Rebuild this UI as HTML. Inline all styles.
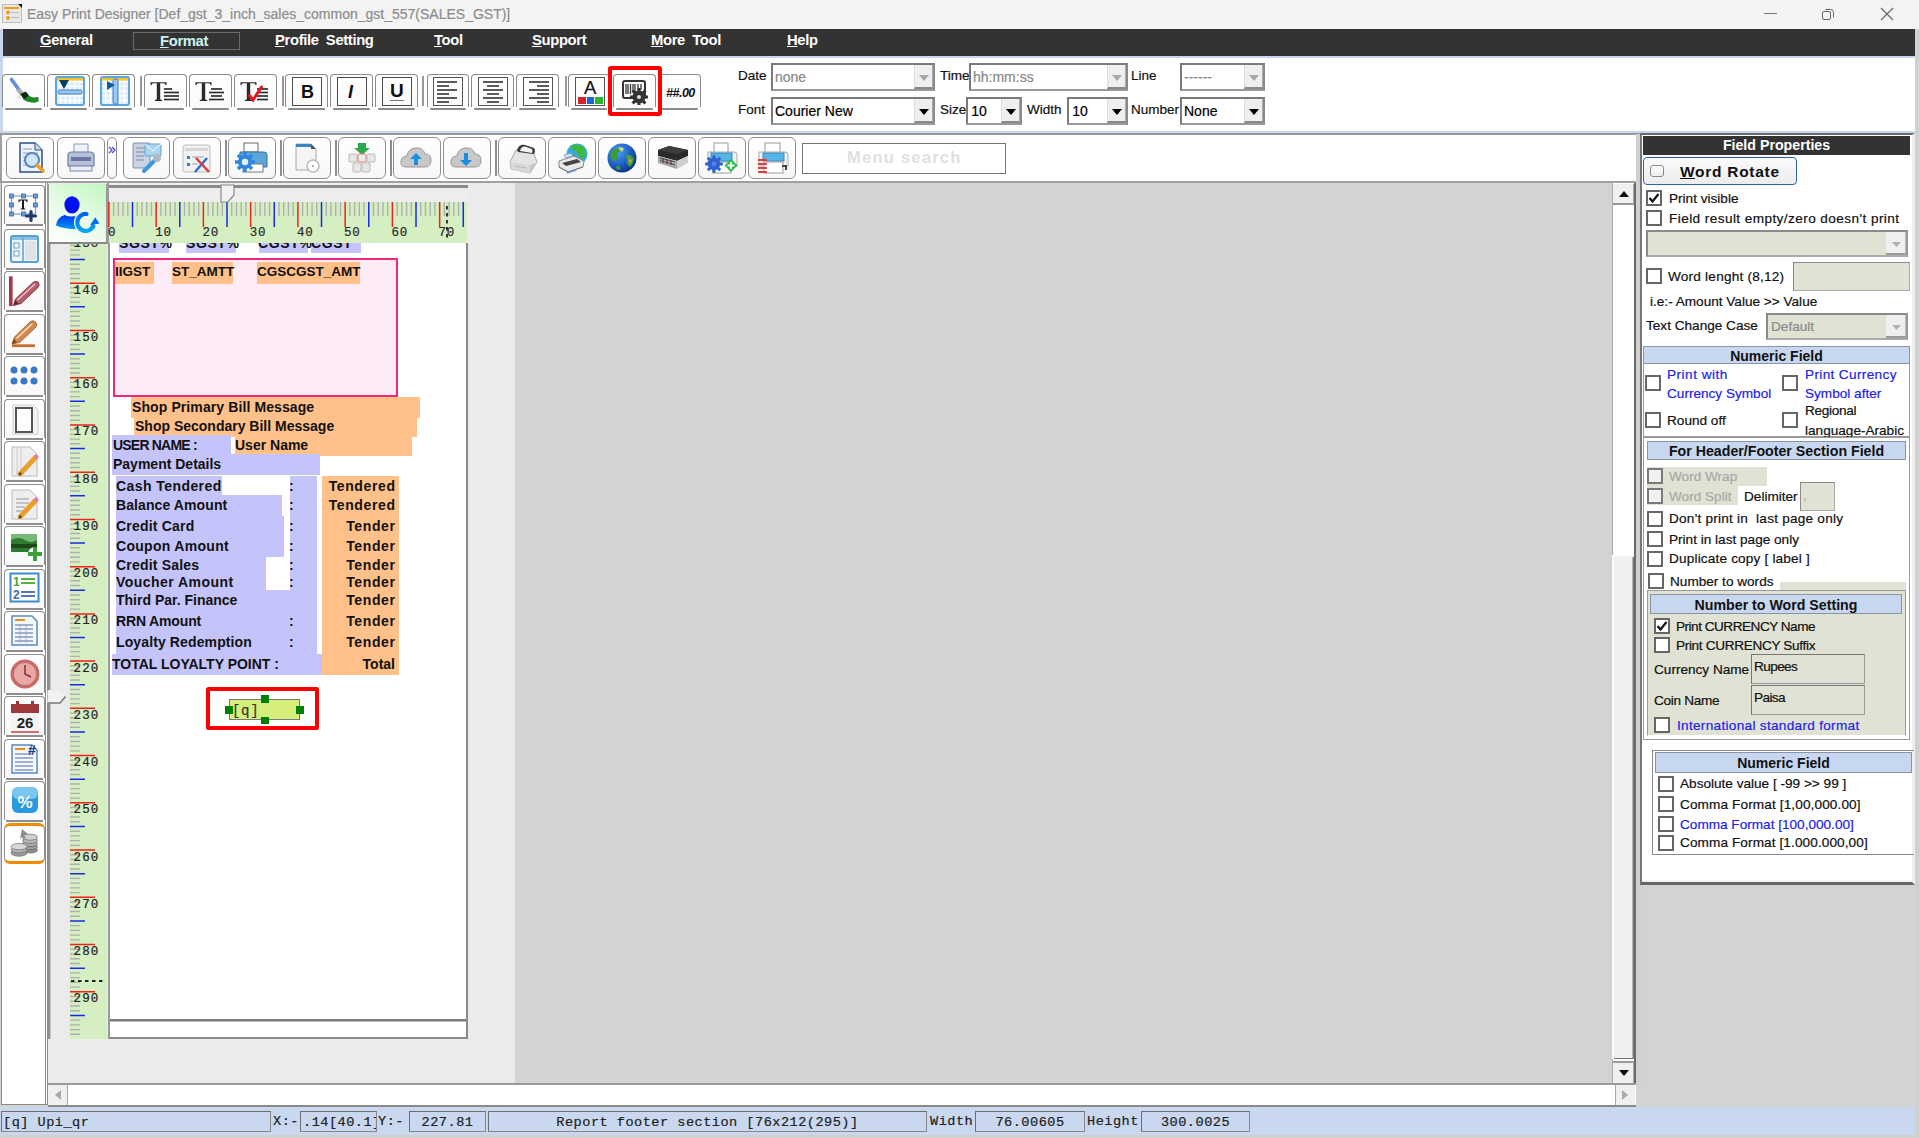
<!DOCTYPE html>
<html><head><meta charset="utf-8">
<style>
*{margin:0;padding:0;box-sizing:border-box}
html,body{width:1919px;height:1138px;overflow:hidden;background:#d3d3d3;font-family:"Liberation Sans",sans-serif;position:relative}
.a{position:absolute}
.t{position:absolute;white-space:pre;line-height:1;-webkit-text-stroke:0.2px currentColor}
.t[style*="font-weight:bold"],#menu .t{-webkit-text-stroke:0}
.tb{position:absolute;background:#fff;border:1px solid #a9a9a9;border-radius:5px;box-shadow:inset 0 -1px 0 #cfcfcf}
.cb{position:absolute;width:16px;height:16px;border:2px solid #6b6b6b;background:#fff}
.mono{font-family:"Liberation Mono",monospace}
</style></head><body>

<!-- ============ TITLE BAR ============ -->
<div class="a" style="left:0;top:0;width:1919px;height:29px;background:#f3f3f3"></div>
<svg class="a" style="left:2px;top:3px" width="21" height="21" viewBox="0 0 21 21">
 <rect x="0.5" y="1.5" width="19" height="18" fill="#e8e8e8" stroke="#bdbdbd"/>
 <rect x="2" y="4" width="15" height="2" fill="#f39a1a"/>
 <circle cx="6" cy="9.5" r="2" fill="#f39a1a"/><circle cx="6" cy="15" r="2" fill="#f39a1a"/>
 <rect x="9" y="9" width="8" height="1" fill="#bbb"/><rect x="9" y="14" width="8" height="1" fill="#bbb"/>
 <path d="M16 1h4v4z" fill="#111"/>
</svg>
<div class="t" style="left:27px;top:7px;font-size:14px;color:#8c8c8c">Easy Print Designer [Def_gst_3_inch_sales_common_gst_557(SALES_GST)]</div>
<div class="a" style="left:1764px;top:13px;width:13px;height:1px;background:#777"></div>
<svg class="a" style="left:1821px;top:7px" width="14" height="14" viewBox="0 0 14 14"><rect x="1.5" y="4.5" width="8" height="8" rx="1.5" fill="none" stroke="#666"/><path d="M4.5 2.5h5a3 3 0 0 1 3 3v5" fill="none" stroke="#666"/></svg>
<svg class="a" style="left:1880px;top:7px" width="14" height="14" viewBox="0 0 14 14"><path d="M1 1L13 13M13 1L1 13" stroke="#666" stroke-width="1.2"/></svg>

<!-- ============ MENU BAR ============ -->
<div class="a" style="left:0;top:29px;width:3px;height:104px;background:#c8d6ee"></div>
<div class="a" style="left:1915px;top:29px;width:4px;height:1109px;background:#d0d0d0"></div>
<div class="a" style="left:3px;top:29px;width:1912px;height:27px;background:#333"></div>
<div class="a" style="left:3px;top:56px;width:1912px;height:2px;background:#c8d6ee"></div>
<div class="a" style="left:133px;top:32px;width:107px;height:18px;border:1px solid #6a6a6a"></div>
<div id="menu" style="position:absolute;left:0;top:0;color:#fff;font-weight:bold;font-size:14.8px;letter-spacing:-0.35px;word-spacing:3.5px">
 <div class="t" style="left:40px;top:33px"><u>G</u>eneral</div>
 <div class="t" style="left:160px;top:34px;color:#cdf2f0"><u>F</u>ormat</div>
 <div class="t" style="left:275px;top:33px"><u>P</u>rofile Setting</div>
 <div class="t" style="left:434px;top:33px"><u>T</u>ool</div>
 <div class="t" style="left:532px;top:33px"><u>S</u>upport</div>
 <div class="t" style="left:651px;top:33px"><u>M</u>ore Tool</div>
 <div class="t" style="left:787px;top:33px"><u>H</u>elp</div>
</div>

<!-- ============ TOOLBAR 1 ============ -->
<div class="a" style="left:3px;top:58px;width:1912px;height:73px;background:#fff"></div>
<div class="a" style="left:0;top:131px;width:1915px;height:2px;background:#c8d6ee"></div>
<div class="a" style="left:0;top:133px;width:1915px;height:2px;background:#9a9a9a"></div>
<div class="a" style="left:2px;top:74px;width:43px;height:33px;border:1.5px solid #8a8a8a;border-bottom:none;border-radius:4px 4px 0 0;background:linear-gradient(#fff,#fafafa)"></div><div class="a" style="left:5px;top:108px;width:37px;height:2px;background:#8a8a8a;border-radius:1px"></div>
<div class="a" style="left:47px;top:74px;width:43px;height:33px;border:1.5px solid #8a8a8a;border-bottom:none;border-radius:4px 4px 0 0;background:linear-gradient(#fff,#fafafa)"></div><div class="a" style="left:50px;top:108px;width:37px;height:2px;background:#8a8a8a;border-radius:1px"></div>
<div class="a" style="left:92px;top:74px;width:43px;height:33px;border:1.5px solid #8a8a8a;border-bottom:none;border-radius:4px 4px 0 0;background:linear-gradient(#fff,#fafafa)"></div><div class="a" style="left:95px;top:108px;width:37px;height:2px;background:#8a8a8a;border-radius:1px"></div>
<div class="a" style="left:140px;top:76px;width:2px;height:30px;background:#9a9a9a"></div>
<div class="a" style="left:144px;top:74px;width:43px;height:33px;border:1.5px solid #8a8a8a;border-bottom:none;border-radius:4px 4px 0 0;background:linear-gradient(#fff,#fafafa)"></div><div class="a" style="left:147px;top:108px;width:37px;height:2px;background:#8a8a8a;border-radius:1px"></div>
<div class="a" style="left:189px;top:74px;width:43px;height:33px;border:1.5px solid #8a8a8a;border-bottom:none;border-radius:4px 4px 0 0;background:linear-gradient(#fff,#fafafa)"></div><div class="a" style="left:192px;top:108px;width:37px;height:2px;background:#8a8a8a;border-radius:1px"></div>
<div class="a" style="left:234px;top:74px;width:43px;height:33px;border:1.5px solid #8a8a8a;border-bottom:none;border-radius:4px 4px 0 0;background:linear-gradient(#fff,#fafafa)"></div><div class="a" style="left:237px;top:108px;width:37px;height:2px;background:#8a8a8a;border-radius:1px"></div>
<div class="a" style="left:282px;top:76px;width:2px;height:30px;background:#9a9a9a"></div>
<div class="a" style="left:285px;top:74px;width:43px;height:33px;border:1.5px solid #8a8a8a;border-bottom:none;border-radius:4px 4px 0 0;background:linear-gradient(#fff,#fafafa)"></div><div class="a" style="left:288px;top:108px;width:37px;height:2px;background:#8a8a8a;border-radius:1px"></div>
<div class="a" style="left:330px;top:74px;width:43px;height:33px;border:1.5px solid #8a8a8a;border-bottom:none;border-radius:4px 4px 0 0;background:linear-gradient(#fff,#fafafa)"></div><div class="a" style="left:333px;top:108px;width:37px;height:2px;background:#8a8a8a;border-radius:1px"></div>
<div class="a" style="left:375px;top:74px;width:43px;height:33px;border:1.5px solid #8a8a8a;border-bottom:none;border-radius:4px 4px 0 0;background:linear-gradient(#fff,#fafafa)"></div><div class="a" style="left:378px;top:108px;width:37px;height:2px;background:#8a8a8a;border-radius:1px"></div>
<div class="a" style="left:422px;top:76px;width:2px;height:30px;background:#9a9a9a"></div>
<div class="a" style="left:427px;top:74px;width:42px;height:33px;border:1.5px solid #8a8a8a;border-bottom:none;border-radius:4px 4px 0 0;background:linear-gradient(#fff,#fafafa)"></div><div class="a" style="left:430px;top:108px;width:36px;height:2px;background:#8a8a8a;border-radius:1px"></div>
<div class="a" style="left:471px;top:74px;width:43px;height:33px;border:1.5px solid #8a8a8a;border-bottom:none;border-radius:4px 4px 0 0;background:linear-gradient(#fff,#fafafa)"></div><div class="a" style="left:474px;top:108px;width:37px;height:2px;background:#8a8a8a;border-radius:1px"></div>
<div class="a" style="left:516px;top:74px;width:43px;height:33px;border:1.5px solid #8a8a8a;border-bottom:none;border-radius:4px 4px 0 0;background:linear-gradient(#fff,#fafafa)"></div><div class="a" style="left:519px;top:108px;width:37px;height:2px;background:#8a8a8a;border-radius:1px"></div>
<div class="a" style="left:565px;top:76px;width:2px;height:30px;background:#9a9a9a"></div>
<div class="a" style="left:568px;top:74px;width:42px;height:33px;border:1.5px solid #8a8a8a;border-bottom:none;border-radius:4px 4px 0 0;background:linear-gradient(#fff,#fafafa)"></div><div class="a" style="left:571px;top:108px;width:36px;height:2px;background:#8a8a8a;border-radius:1px"></div>
<div class="a" style="left:613px;top:74px;width:43px;height:33px;border:1.5px solid #8a8a8a;border-bottom:none;border-radius:4px 4px 0 0;background:linear-gradient(#fff,#fafafa)"></div><div class="a" style="left:616px;top:108px;width:37px;height:2px;background:#8a8a8a;border-radius:1px"></div>
<div class="a" style="left:658px;top:74px;width:43px;height:33px;border:1.5px solid #8a8a8a;border-bottom:none;border-radius:4px 4px 0 0;background:linear-gradient(#fff,#fafafa)"></div><div class="a" style="left:661px;top:108px;width:37px;height:2px;background:#8a8a8a;border-radius:1px"></div>
<div class="a" style="left:292px;top:77px;width:30px;height:29px;border:1.6px solid #4a4a4a"></div>
<div class="a" style="left:337px;top:77px;width:30px;height:29px;border:1.6px solid #4a4a4a"></div>
<div class="a" style="left:382px;top:77px;width:30px;height:29px;border:1.6px solid #4a4a4a"></div>
<div class="a" style="left:433px;top:77px;width:30px;height:29px;border:1.6px solid #555"></div>
<div class="a" style="left:478px;top:77px;width:30px;height:29px;border:1.6px solid #555"></div>
<div class="a" style="left:523px;top:77px;width:30px;height:29px;border:1.6px solid #555"></div>
<div class="a" style="left:575px;top:77px;width:30px;height:29px;border:1.6px solid #555"></div>
<svg class="a" style="left:8px;top:76px" width="32" height="30" viewBox="0 0 32 30">
 <path d="M3.5 3.5L11.5 14.5" stroke="#6a90d8" stroke-width="3.8" stroke-linecap="round"/>
 <path d="M10 13L14.5 19" stroke="#a8acb0" stroke-width="4.5"/>
 <path d="M12.5 18L17.5 15.5Q20 17.5 21 20L16 24Z" fill="#0a2a0a"/>
 <path d="M16 24L21 19.5Q23 21.5 26 21.5L30.5 21L30.5 25.5Q28 27 24 26.5Q19 26 16 24Z" fill="#1c8a22"/>
 <path d="M9 21L13 22" stroke="#ddd" stroke-width="1.5"/>
</svg>
<svg class="a" style="left:55px;top:76px" width="30" height="30" viewBox="0 0 30 30"><rect x="1" y="1" width="28" height="28" rx="2" fill="#d9ecfb" stroke="#5aa6dd" stroke-width="2"/><path d="M5.7 3V28M3 5.7H28" stroke="#fff" stroke-width="1.4"/><path d="M10.4 3V28M3 10.4H28" stroke="#fff" stroke-width="1.4"/><path d="M15.100000000000001 3V28M3 15.100000000000001H28" stroke="#fff" stroke-width="1.4"/><path d="M19.8 3V28M3 19.8H28" stroke="#fff" stroke-width="1.4"/><path d="M24.5 3V28M3 24.5H28" stroke="#fff" stroke-width="1.4"/><rect x="2" y="2" width="26" height="2.5" fill="#f5c62a"/><rect x="3" y="14" width="24" height="4" rx="1.5" fill="#9cc6ee" stroke="#3d7fc8"/><path d="M4 4H14L9 13Z" fill="#0b3b58"/></svg>
<svg class="a" style="left:100px;top:76px" width="30" height="30" viewBox="0 0 30 30"><rect x="1" y="1" width="28" height="28" rx="2" fill="#d9ecfb" stroke="#5aa6dd" stroke-width="2"/><path d="M5.7 3V28M3 5.7H28" stroke="#fff" stroke-width="1.4"/><path d="M10.4 3V28M3 10.4H28" stroke="#fff" stroke-width="1.4"/><path d="M15.100000000000001 3V28M3 15.100000000000001H28" stroke="#fff" stroke-width="1.4"/><path d="M19.8 3V28M3 19.8H28" stroke="#fff" stroke-width="1.4"/><path d="M24.5 3V28M3 24.5H28" stroke="#fff" stroke-width="1.4"/><rect x="2" y="2" width="26" height="2.5" fill="#f5c62a"/><rect x="13" y="3" width="5" height="25" rx="1.5" fill="#9cc6ee" stroke="#3d7fc8"/><path d="M7 5L15 9L7 14Z" fill="#0b59a8"/></svg>
<svg class="a" style="left:150px;top:80px" width="32" height="24" viewBox="0 0 32 24"><path d="M0.5 2.3H16.5V5.2L15.7 5.2Q15.3 3.4 13.6 3.3H10.2V18.9Q10.3 20 12.2 20.1V20.9H4.8V20.1Q6.7 20 6.8 18.9V3.3H3.4Q1.7 3.4 1.3 5.2L0.5 5.2Z" fill="#2a2a2a"/><path d="M14 9H22" stroke="#2e2e2e" stroke-width="1.7"/><path d="M14 12.5H29" stroke="#2e2e2e" stroke-width="1.7"/><path d="M14 16H29" stroke="#2e2e2e" stroke-width="1.7"/><path d="M14 19.5H29" stroke="#2e2e2e" stroke-width="1.7"/></svg>
<svg class="a" style="left:195px;top:80px" width="32" height="24" viewBox="0 0 32 24"><path d="M0.5 2.3H16.5V5.2L15.7 5.2Q15.3 3.4 13.6 3.3H10.2V18.9Q10.3 20 12.2 20.1V20.9H4.8V20.1Q6.7 20 6.8 18.9V3.3H3.4Q1.7 3.4 1.3 5.2L0.5 5.2Z" fill="#2a2a2a"/><path d="M16 9H27" stroke="#2e2e2e" stroke-width="1.7"/><path d="M14 12.5H29" stroke="#2e2e2e" stroke-width="1.7"/><path d="M16 16H27" stroke="#2e2e2e" stroke-width="1.7"/><path d="M14 19.5H29" stroke="#2e2e2e" stroke-width="1.7"/></svg>
<svg class="a" style="left:240px;top:80px" width="32" height="24" viewBox="0 0 32 24"><path d="M0.5 2.3H16.5V5.2L15.7 5.2Q15.3 3.4 13.6 3.3H10.2V18.9Q10.3 20 12.2 20.1V20.9H4.8V20.1Q6.7 20 6.8 18.9V3.3H3.4Q1.7 3.4 1.3 5.2L0.5 5.2Z" fill="#2a2a2a"/><path d="M17 9H28" stroke="#2e2e2e" stroke-width="1.7"/><path d="M17 12.5H28" stroke="#2e2e2e" stroke-width="1.7"/><path d="M17 16H28" stroke="#2e2e2e" stroke-width="1.7"/><path d="M17 19.5H28" stroke="#2e2e2e" stroke-width="1.7"/><path d="M9.5 15.5 L13 20 L21.5 7" stroke="#e8141c" stroke-width="3" fill="none" stroke-linecap="round"/></svg>
<div class="t" style="left:301px;top:83px;font-size:18px;font-weight:bold;color:#111">B</div>
<div class="t" style="left:348px;top:83px;font-size:18px;font-weight:bold;font-style:italic;color:#111">I</div>
<div class="t" style="left:390px;top:81px;font-size:19px;font-weight:bold;color:#111">U</div>
<div class="a" style="left:390px;top:100px;width:14px;height:1px;background:#777"></div>
<svg class="a" style="left:435px;top:79px" width="26" height="25" viewBox="0 0 26 25"><path d="M2 3H22" stroke="#333" stroke-width="1.6"/><path d="M2 7H14" stroke="#333" stroke-width="1.6"/><path d="M2 11H22" stroke="#333" stroke-width="1.6"/><path d="M2 15H14" stroke="#333" stroke-width="1.6"/><path d="M2 19H22" stroke="#333" stroke-width="1.6"/><path d="M2 23H14" stroke="#333" stroke-width="1.6"/></svg>
<svg class="a" style="left:480px;top:79px" width="26" height="25" viewBox="0 0 26 25"><path d="M3 3H23" stroke="#333" stroke-width="1.6"/><path d="M7 7H19" stroke="#333" stroke-width="1.6"/><path d="M3 11H23" stroke="#333" stroke-width="1.6"/><path d="M7 15H19" stroke="#333" stroke-width="1.6"/><path d="M3 19H23" stroke="#333" stroke-width="1.6"/><path d="M7 23H19" stroke="#333" stroke-width="1.6"/></svg>
<svg class="a" style="left:525px;top:79px" width="26" height="25" viewBox="0 0 26 25"><path d="M4 3H24" stroke="#333" stroke-width="1.6"/><path d="M12 7H24" stroke="#333" stroke-width="1.6"/><path d="M4 11H24" stroke="#333" stroke-width="1.6"/><path d="M12 15H24" stroke="#333" stroke-width="1.6"/><path d="M4 19H24" stroke="#333" stroke-width="1.6"/><path d="M12 23H24" stroke="#333" stroke-width="1.6"/></svg>
<div class="t" style="left:584px;top:79px;font-size:18.5px;font-weight:normal;color:#111">A</div>
<div class="a" style="left:578px;top:96.5px;width:7.5px;height:7.5px;background:#d6222c"></div>
<div class="a" style="left:586.5px;top:96.5px;width:7.5px;height:7.5px;background:#1a67d0"></div>
<div class="a" style="left:595px;top:96.5px;width:7.5px;height:7.5px;background:#24b82a"></div>
<svg class="a" style="left:621px;top:79px" width="28" height="26" viewBox="0 0 28 26">
 <rect x="2" y="2" width="22" height="17" rx="2" fill="#fff" stroke="#333" stroke-width="2"/>
 <path d="M5 5v10M7 5v10M9.5 5v10M12 5v8M14 5v8M17 5v6M20 5v6" stroke="#333" stroke-width="1.3"/>
 <g transform="translate(18,18)"><circle r="6.5" fill="#333"/>
 <path d="M0 -9V9M-9 0H9M-6.4 -6.4L6.4 6.4M6.4 -6.4L-6.4 6.4" stroke="#333" stroke-width="3"/><circle r="2" fill="#ddd"/></g>
</svg>
<div class="a" style="left:608px;top:66px;width:54px;height:50px;border:4.3px solid #fe0000;border-radius:3px"></div>
<div class="t" style="left:666px;top:87px;font-size:12.5px;font-weight:bold;font-style:italic;color:#111;letter-spacing:-0.5px">##.00</div>
<div class="t" style="left:738px;top:69px;font-size:13.5px;color:#111">Date</div>
<div class="a" style="left:771px;top:63px;width:164px;height:28px;border:2px solid #7a7a7a;border-right-color:#8a8a8a;border-bottom-color:#9a9a9a;background:#fff"></div><div class="a" style="left:914px;top:65px;width:19px;height:24px;background:#efefef;border-right:1px solid #aaa;border-bottom:2px solid #888;border-left:1px solid #ddd"></div><svg class="a" style="left:918px;top:73.0px" width="12" height="8"><path d="M1 2h10l-5 6z" fill="#a8a8a8"/></svg><div class="t" style="left:775px;top:70.2px;font-size:14px;color:#888">none</div>
<div class="t" style="left:940px;top:69px;font-size:13.5px;color:#111">Time</div>
<div class="a" style="left:969px;top:63px;width:159px;height:28px;border:2px solid #7a7a7a;border-right-color:#8a8a8a;border-bottom-color:#9a9a9a;background:#fff"></div><div class="a" style="left:1107px;top:65px;width:19px;height:24px;background:#efefef;border-right:1px solid #aaa;border-bottom:2px solid #888;border-left:1px solid #ddd"></div><svg class="a" style="left:1111px;top:73.0px" width="12" height="8"><path d="M1 2h10l-5 6z" fill="#a8a8a8"/></svg><div class="t" style="left:973px;top:70.2px;font-size:14px;color:#888">hh:mm:ss</div>
<div class="t" style="left:1131px;top:69px;font-size:13.5px;color:#111">Line</div>
<div class="a" style="left:1180px;top:63px;width:85px;height:28px;border:2px solid #7a7a7a;border-right-color:#8a8a8a;border-bottom-color:#9a9a9a;background:#fff"></div><div class="a" style="left:1244px;top:65px;width:19px;height:24px;background:#efefef;border-right:1px solid #aaa;border-bottom:2px solid #888;border-left:1px solid #ddd"></div><svg class="a" style="left:1248px;top:73.0px" width="12" height="8"><path d="M1 2h10l-5 6z" fill="#a8a8a8"/></svg><div class="t" style="left:1184px;top:70.2px;font-size:14px;color:#888">------</div>
<div class="t" style="left:738px;top:103px;font-size:13.5px;color:#111">Font</div>
<div class="a" style="left:771px;top:97px;width:164px;height:28px;border:2px solid #7a7a7a;border-right-color:#8a8a8a;border-bottom-color:#9a9a9a;background:#fff"></div><div class="a" style="left:914px;top:99px;width:19px;height:24px;background:#efefef;border-right:1px solid #aaa;border-bottom:2px solid #888;border-left:1px solid #ddd"></div><svg class="a" style="left:918px;top:107.0px" width="12" height="8"><path d="M1 2h10l-5 6z" fill="#000"/></svg><div class="t" style="left:775px;top:104.2px;font-size:14px;color:#000">Courier New</div>
<div class="t" style="left:940px;top:103px;font-size:13.5px;color:#111">Size</div>
<div class="a" style="left:966px;top:97px;width:56px;height:28px;border:2px solid #7a7a7a;border-right-color:#8a8a8a;border-bottom-color:#9a9a9a;background:#fff"></div><div class="a" style="left:1001px;top:99px;width:19px;height:24px;background:#efefef;border-right:1px solid #aaa;border-bottom:2px solid #888;border-left:1px solid #ddd"></div><svg class="a" style="left:1005px;top:107.0px" width="12" height="8"><path d="M1 2h10l-5 6z" fill="#000"/></svg><div class="t" style="left:970px;top:104.2px;font-size:14px;color:#000">&#8202;10</div>
<div class="t" style="left:1027px;top:103px;font-size:13.5px;color:#111">Width</div>
<div class="a" style="left:1067px;top:97px;width:61px;height:28px;border:2px solid #7a7a7a;border-right-color:#8a8a8a;border-bottom-color:#9a9a9a;background:#fff"></div><div class="a" style="left:1107px;top:99px;width:19px;height:24px;background:#efefef;border-right:1px solid #aaa;border-bottom:2px solid #888;border-left:1px solid #ddd"></div><svg class="a" style="left:1111px;top:107.0px" width="12" height="8"><path d="M1 2h10l-5 6z" fill="#000"/></svg><div class="t" style="left:1071px;top:104.2px;font-size:14px;color:#000">&#8202;10</div>
<div class="t" style="left:1131px;top:103px;font-size:13.5px;color:#111">Number</div>
<div class="a" style="left:1180px;top:97px;width:85px;height:28px;border:2px solid #7a7a7a;border-right-color:#8a8a8a;border-bottom-color:#9a9a9a;background:#fff"></div><div class="a" style="left:1244px;top:99px;width:19px;height:24px;background:#efefef;border-right:1px solid #aaa;border-bottom:2px solid #888;border-left:1px solid #ddd"></div><svg class="a" style="left:1248px;top:107.0px" width="12" height="8"><path d="M1 2h10l-5 6z" fill="#000"/></svg><div class="t" style="left:1184px;top:104.2px;font-size:14px;color:#000">None</div>

<!-- ============ TOOLBAR 2 ============ -->
<div class="a" style="left:0;top:135px;width:1638px;height:48px;background:#fff;border-left:2px solid #a0a0a0;border-bottom:2px solid #a0a0a0"></div>
<div class="a" style="left:6px;top:137px;width:48px;height:42px;border:1.5px solid #8e8e8e;border-radius:6px;background:linear-gradient(#fff,#f7f7f7)"></div>
<div class="a" style="left:57px;top:137px;width:48px;height:42px;border:1.5px solid #8e8e8e;border-radius:6px;background:linear-gradient(#fff,#f7f7f7)"></div>
<div class="a" style="left:107px;top:137px;width:10px;height:42px;border:1.5px solid #8e8e8e;border-radius:6px;background:linear-gradient(#fff,#f7f7f7)"></div>
<div class="a" style="left:123px;top:137px;width:47px;height:42px;border:1.5px solid #8e8e8e;border-radius:6px;background:linear-gradient(#fff,#f7f7f7)"></div>
<div class="a" style="left:173px;top:137px;width:48px;height:42px;border:1.5px solid #8e8e8e;border-radius:6px;background:linear-gradient(#fff,#f7f7f7)"></div>
<div class="a" style="left:228px;top:137px;width:48px;height:42px;border:1.5px solid #8e8e8e;border-radius:6px;background:linear-gradient(#fff,#f7f7f7)"></div>
<div class="a" style="left:283px;top:137px;width:48px;height:42px;border:1.5px solid #8e8e8e;border-radius:6px;background:linear-gradient(#fff,#f7f7f7)"></div>
<div class="a" style="left:338px;top:137px;width:48px;height:42px;border:1.5px solid #8e8e8e;border-radius:6px;background:linear-gradient(#fff,#f7f7f7)"></div>
<div class="a" style="left:393px;top:137px;width:48px;height:42px;border:1.5px solid #8e8e8e;border-radius:6px;background:linear-gradient(#fff,#f7f7f7)"></div>
<div class="a" style="left:443px;top:137px;width:48px;height:42px;border:1.5px solid #8e8e8e;border-radius:6px;background:linear-gradient(#fff,#f7f7f7)"></div>
<div class="a" style="left:498px;top:137px;width:48px;height:42px;border:1.5px solid #8e8e8e;border-radius:6px;background:linear-gradient(#fff,#f7f7f7)"></div>
<div class="a" style="left:548px;top:137px;width:48px;height:42px;border:1.5px solid #8e8e8e;border-radius:6px;background:linear-gradient(#fff,#f7f7f7)"></div>
<div class="a" style="left:598px;top:137px;width:48px;height:42px;border:1.5px solid #8e8e8e;border-radius:6px;background:linear-gradient(#fff,#f7f7f7)"></div>
<div class="a" style="left:648px;top:137px;width:48px;height:42px;border:1.5px solid #8e8e8e;border-radius:6px;background:linear-gradient(#fff,#f7f7f7)"></div>
<div class="a" style="left:698px;top:137px;width:48px;height:42px;border:1.5px solid #8e8e8e;border-radius:6px;background:linear-gradient(#fff,#f7f7f7)"></div>
<div class="a" style="left:748px;top:137px;width:48px;height:42px;border:1.5px solid #8e8e8e;border-radius:6px;background:linear-gradient(#fff,#f7f7f7)"></div>
<div class="a" style="left:225px;top:140px;width:1.5px;height:36px;background:#8e8e8e"></div>
<div class="a" style="left:280px;top:140px;width:1.5px;height:36px;background:#8e8e8e"></div>
<div class="a" style="left:335px;top:140px;width:1.5px;height:36px;background:#8e8e8e"></div>
<div class="a" style="left:390px;top:140px;width:1.5px;height:36px;background:#8e8e8e"></div>
<div class="a" style="left:495px;top:140px;width:1.5px;height:36px;background:#8e8e8e"></div>
<svg class="a" style="left:18px;top:141px" width="30" height="34" viewBox="0 0 30 34"><path d="M2 2H17L24 9V31H2Z" fill="#eef3fa" stroke="#2b4f8a" stroke-width="1.5"/>
 <path d="M17 2V9H24" fill="#cfdcef" stroke="#2b4f8a" stroke-width="1"/>
 <path d="M5 8H14M5 12H20M5 16H9M5 20H9M5 24H9" stroke="#8aa0c0" stroke-width="1.2"/>
 <circle cx="14" cy="19" r="7" fill="#cfe6fb" stroke="#5a86b8" stroke-width="2"/>
 <path d="M19 24L25 30" stroke="#f0a020" stroke-width="3.5" stroke-linecap="round"/></svg>
<svg class="a" style="left:66px;top:143px" width="30" height="30" viewBox="0 0 30 30"><rect x="8" y="1" width="14" height="10" fill="#f1f3f8" stroke="#8d98b8"/>
 <path d="M2 12Q2 9 6 9H24Q28 9 28 12V23H2Z" fill="#b6bfd8" stroke="#6f7ca8" stroke-width="1.2"/>
 <rect x="5" y="14" width="20" height="4" fill="#6b78a6"/>
 <rect x="4" y="23" width="22" height="5" fill="#e8ebf3" stroke="#7b86b0"/></svg>
<svg class="a" style="left:108px;top:146px" width="8" height="8" viewBox="0 0 8 8"><path d="M1 1L4 4L1 7M4 1L7 4L4 7" stroke="#4a4ad0" stroke-width="1.2" fill="none"/></svg>
<svg class="a" style="left:132px;top:142px" width="30" height="32" viewBox="0 0 30 32"><rect x="1" y="1" width="17" height="25" rx="1" fill="#c9d3e2" stroke="#8092ad"/>
 <path d="M4 6H14M4 10H14M4 14H12M4 18H12" stroke="#7a8aa6"/>
 <rect x="13" y="2" width="16" height="12" rx="1" fill="#a9d4f2" stroke="#6aa0cc"/>
 <path d="M13 2L21 9L29 2" stroke="#fff" fill="none"/>
 <path d="M12 29L24 17" stroke="#3d9ae0" stroke-width="4" stroke-linecap="round"/>
 <circle cx="25" cy="16" r="4" fill="#b0b8c4"/></svg>
<svg class="a" style="left:182px;top:144px" width="30" height="30" viewBox="0 0 30 30"><rect x="1" y="1" width="27" height="27" rx="2" fill="#f2f2f2" stroke="#bdbdbd"/>
 <rect x="3" y="4" width="23" height="3" fill="#d6d6d6"/>
 <rect x="5" y="12" width="3" height="3" fill="#2e7fd8"/><rect x="5" y="19" width="3" height="3" fill="#2e7fd8"/>
 <path d="M10 13H22M10 20H16" stroke="#c8c8c8" stroke-width="2"/>
 <path d="M13 28L25 14" stroke="#2e6fd0" stroke-width="2.5"/><path d="M14 14L27 28" stroke="#d63a3a" stroke-width="2.5"/></svg>
<svg class="a" style="left:235px;top:142px" width="34" height="32" viewBox="0 0 34 32"><rect x="9" y="1" width="14" height="9" fill="#fff" stroke="#666"/>
 <path d="M5 10H29Q32 10 32 13V25H5Z" fill="#5aa6d6" stroke="#3a6f98"/>
 <rect x="8" y="22" width="20" height="8" fill="#fff" stroke="#777"/>
 <g transform="translate(10,20)"><circle r="7" fill="#2f86e0"/><path d="M0 -10V10M-10 0H10M-7 -7L7 7M7 -7L-7 7" stroke="#2f86e0" stroke-width="3.5"/><circle r="3.2" fill="#e8f2ff"/></g></svg>
<svg class="a" style="left:294px;top:143px" width="28" height="30" viewBox="0 0 28 30"><path d="M2 1H17L22 6V27H2Z" fill="#f4f4f4" stroke="#aaa"/>
 <rect x="2" y="1" width="15" height="3" fill="#3b82c4"/>
 <path d="M17 1V6H22" fill="#555"/>
 <g transform="translate(19,23)"><circle r="6" fill="#fff" stroke="#bbb" stroke-width="1.5"/><circle r="1" fill="#999"/></g></svg>
<svg class="a" style="left:348px;top:142px" width="28" height="32" viewBox="0 0 28 32"><path d="M10 1H18V6H22L14 13L6 6H10Z" fill="#2fa84a"/>
 <rect x="1" y="12" width="8" height="8" rx="1" fill="#e6e6e6" stroke="#bbb"/>
 <rect x="10" y="12" width="8" height="8" rx="1" fill="#ededed" stroke="#d77"/>
 <rect x="19" y="12" width="8" height="8" rx="1" fill="#e6e6e6" stroke="#bbb"/>
 <rect x="5" y="21" width="8" height="9" rx="1" fill="#e6e6e6" stroke="#bbb"/>
 <rect x="14" y="21" width="8" height="9" rx="1" fill="#e6e6e6" stroke="#bbb"/></svg>
<svg class="a" style="left:400px;top:145px" width="32" height="24" viewBox="0 0 32 24"><path d="M6 22Q0 22 1 16Q2 11 7 11Q8 4 15 3Q23 2 25 9Q31 9 31 15Q31 22 25 22Z" fill="#c8c8c8" stroke="#999"/><path d="M16 8L22 14H18V20H14V14H10Z" fill="#1a8fe6"/></svg>
<svg class="a" style="left:450px;top:145px" width="32" height="24" viewBox="0 0 32 24"><path d="M6 22Q0 22 1 16Q2 11 7 11Q8 4 15 3Q23 2 25 9Q31 9 31 15Q31 22 25 22Z" fill="#c8c8c8" stroke="#999"/><path d="M16 21L22 15H18V8H14V15H10Z" fill="#1a8fe6"/></svg>
<svg class="a" style="left:506px;top:142px" width="34" height="34" viewBox="0 0 34 34"><path d="M4 20L10 8L28 12L31 20L24 31L5 27Z" fill="#e4e4e4" stroke="#a8a8a8"/>
 <path d="M5 27L24 31L31 20L24 23Z" fill="#c8c8c8"/><path d="M4 20L24 23L24 31L5 27Z" fill="#d8d8d8"/>
 <path d="M11 8Q13 2 19 3L28 6Q30 9 28 12L12 10Z" fill="#3a3a3a"/><path d="M14 9Q15 4 19 4.5L26 7Q27 9 26 11Z" fill="#f4f4f4"/>
 <path d="M9 24L20 26" stroke="#b8b8b8"/></svg>
<svg class="a" style="left:556px;top:142px" width="34" height="34" viewBox="0 0 34 34"><circle cx="21" cy="12" r="10.5" fill="#3aa8e8"/><path d="M14 4Q21 1 28 5Q31 12 27 18Q22 14 20 9Q16 9 14 4Z" fill="#3cb83a"/>
 <path d="M12 12Q17 10 20 14L16 18Z" fill="#3cb83a"/>
 <path d="M3 19L18 14L28 19L27 25L12 30L3 25Z" fill="#e8e8e8" stroke="#888"/><path d="M6 21L21 17L25 20L10 24Z" fill="#444"/>
 <path d="M3 25L12 30L27 25" fill="none" stroke="#777"/><path d="M8 13L15 11L17 14L10 16Z" fill="#cfe4f4" stroke="#6a9ac8" stroke-width=".8"/>
 <path d="M11 31L20 28" stroke="#6a9ac8" stroke-width="1.5"/></svg>
<svg class="a" style="left:606px;top:142px" width="32" height="32" viewBox="0 0 32 32"><defs><radialGradient id="gl" cx=".35" cy=".3" r=".8"><stop offset="0" stop-color="#4aa0f0"/><stop offset=".6" stop-color="#1a58c0"/><stop offset="1" stop-color="#0a2a70"/></radialGradient></defs>
 <circle cx="16" cy="16" r="14.5" fill="url(#gl)"/>
 <path d="M6 9Q10 5 15 6Q13 10 11 12Q13 16 9 20Q5 17 4 13Z" fill="#3a9a34"/><path d="M12 6Q16 4 18 7L16 10Z" fill="#c8d890"/>
 <path d="M20 13Q25 12 28 17Q27 22 24 25Q20 22 21 18Z" fill="#4aa030"/><path d="M23 17Q26 17 26 20L23 21Z" fill="#c8a040"/>
 <path d="M10 24Q14 23 15 27L11 28Z" fill="#3a9a34"/></svg>
<svg class="a" style="left:656px;top:144px" width="34" height="28" viewBox="0 0 34 28"><path d="M2 6L13 2L32 6L32 12L21 17L2 12Z" fill="#2a2a2a"/><path d="M2 6L13 2L32 6L21 10Z" fill="#3e3e3e"/>
 <path d="M2 12L21 17L32 12L32 19L21 25L2 19Z" fill="#cfcfcf"/><path d="M2 12L21 17L21 25L2 19Z" fill="#a8a8a8"/>
 <path d="M4 14L19 18M4 16.5L19 21" stroke="#555" stroke-width="1.2"/><path d="M7 14V19M11 15V20M15 16V21" stroke="#6a3a3a" stroke-width="1.2"/></svg>
<svg class="a" style="left:705px;top:141px" width="36" height="36" viewBox="0 0 36 36"><rect x="9" y="2" width="14" height="10" fill="#fff" stroke="#999"/>
 <path d="M3 11H29Q32 11 32 14V25H3Z" fill="#f2f2f2" stroke="#aaa"/><rect x="6" y="12" width="21" height="8" fill="#56b4e6" stroke="#3a88b8"/>
 <rect x="8" y="21" width="18" height="11" fill="#fff" stroke="#999"/>
 <g transform="translate(9,23)"><circle r="6.2" fill="#2a62d4"/><path d="M0 -8.8V8.8M-8.8 0H8.8M-6.2 -6.2L6.2 6.2M6.2 -6.2L-6.2 6.2" stroke="#2a62d4" stroke-width="3"/><circle r="2.4" fill="#6a7ad8"/></g>
 <path d="M26 18L32.5 24.5L26 31L19.5 24.5Z" fill="#22c046"/><path d="M26 21V28M22.5 24.5H29.5" stroke="#fff" stroke-width="1.8"/></svg>
<svg class="a" style="left:755px;top:141px" width="34" height="34" viewBox="0 0 34 34"><rect x="10" y="2" width="15" height="10" fill="#fff" stroke="#999"/>
 <path d="M4 11H30Q33 11 33 14V25H4Z" fill="#f2f2f2" stroke="#aaa"/><rect x="8" y="12" width="21" height="8" fill="#56b4e6" stroke="#3a88b8"/>
 <rect x="9" y="21" width="19" height="11" fill="#fff" stroke="#999"/><path d="M27 25H31V29" fill="none" stroke="#444" stroke-width="2"/>
 <path d="M3 19H12M3 23H12M3 27H12M3 31H12" stroke="#e04040" stroke-width="2.2"/></svg>
<div class="a" style="left:802px;top:143px;width:204px;height:31px;border:1.5px solid #777;background:#fff"></div>
<div class="t" style="left:847px;top:148.8px;font-size:16.5px;font-weight:bold;color:#e0e0e4;letter-spacing:1.25px">Menu search</div>

<!-- ============ CANVAS AREA ============ -->
<div class="a" style="left:48px;top:183px;width:467px;height:901px;background:#ebebeb"></div>
<div class="a" style="left:515px;top:183px;width:1098px;height:901px;background:#d3d3d3"></div>
<div class="a" style="left:1px;top:183px;width:47px;height:922px;background:#fff;border:1.5px solid #8a8a8a;border-top:none;border-right:3px double #8a8a8a"></div>
<div class="a" style="left:4px;top:185px;width:41px;height:39px;border:1.5px solid #8e8e8e;border-bottom:none;border-radius:4px 4px 0 0;background:linear-gradient(#fff,#f8f8f8)"></div><div class="a" style="left:6px;top:224px;width:37px;height:2px;background:#8e8e8e"></div>
<div class="a" style="left:4px;top:228.5px;width:41px;height:39px;border:1.5px solid #8e8e8e;border-bottom:none;border-radius:4px 4px 0 0;background:linear-gradient(#fff,#f8f8f8)"></div><div class="a" style="left:6px;top:267.5px;width:37px;height:2px;background:#8e8e8e"></div>
<div class="a" style="left:4px;top:271px;width:41px;height:39px;border:1.5px solid #8e8e8e;border-bottom:none;border-radius:4px 4px 0 0;background:linear-gradient(#fff,#f8f8f8)"></div><div class="a" style="left:6px;top:310px;width:37px;height:2px;background:#8e8e8e"></div>
<div class="a" style="left:4px;top:313.5px;width:41px;height:39px;border:1.5px solid #8e8e8e;border-bottom:none;border-radius:4px 4px 0 0;background:linear-gradient(#fff,#f8f8f8)"></div><div class="a" style="left:6px;top:352.5px;width:37px;height:2px;background:#8e8e8e"></div>
<div class="a" style="left:4px;top:356px;width:41px;height:39px;border:1.5px solid #8e8e8e;border-bottom:none;border-radius:4px 4px 0 0;background:linear-gradient(#fff,#f8f8f8)"></div><div class="a" style="left:6px;top:395px;width:37px;height:2px;background:#8e8e8e"></div>
<div class="a" style="left:4px;top:398.5px;width:41px;height:39px;border:1.5px solid #8e8e8e;border-bottom:none;border-radius:4px 4px 0 0;background:linear-gradient(#fff,#f8f8f8)"></div><div class="a" style="left:6px;top:437.5px;width:37px;height:2px;background:#8e8e8e"></div>
<div class="a" style="left:4px;top:441px;width:41px;height:39px;border:1.5px solid #8e8e8e;border-bottom:none;border-radius:4px 4px 0 0;background:linear-gradient(#fff,#f8f8f8)"></div><div class="a" style="left:6px;top:480px;width:37px;height:2px;background:#8e8e8e"></div>
<div class="a" style="left:4px;top:483.5px;width:41px;height:39px;border:1.5px solid #8e8e8e;border-bottom:none;border-radius:4px 4px 0 0;background:linear-gradient(#fff,#f8f8f8)"></div><div class="a" style="left:6px;top:522.5px;width:37px;height:2px;background:#8e8e8e"></div>
<div class="a" style="left:4px;top:526px;width:41px;height:39px;border:1.5px solid #8e8e8e;border-bottom:none;border-radius:4px 4px 0 0;background:linear-gradient(#fff,#f8f8f8)"></div><div class="a" style="left:6px;top:565px;width:37px;height:2px;background:#8e8e8e"></div>
<div class="a" style="left:4px;top:568.5px;width:41px;height:39px;border:1.5px solid #8e8e8e;border-bottom:none;border-radius:4px 4px 0 0;background:linear-gradient(#fff,#f8f8f8)"></div><div class="a" style="left:6px;top:607.5px;width:37px;height:2px;background:#8e8e8e"></div>
<div class="a" style="left:4px;top:611px;width:41px;height:39px;border:1.5px solid #8e8e8e;border-bottom:none;border-radius:4px 4px 0 0;background:linear-gradient(#fff,#f8f8f8)"></div><div class="a" style="left:6px;top:650px;width:37px;height:2px;background:#8e8e8e"></div>
<div class="a" style="left:4px;top:653.5px;width:41px;height:39px;border:1.5px solid #8e8e8e;border-bottom:none;border-radius:4px 4px 0 0;background:linear-gradient(#fff,#f8f8f8)"></div><div class="a" style="left:6px;top:692.5px;width:37px;height:2px;background:#8e8e8e"></div>
<div class="a" style="left:4px;top:696px;width:41px;height:39px;border:1.5px solid #8e8e8e;border-bottom:none;border-radius:4px 4px 0 0;background:linear-gradient(#fff,#f8f8f8)"></div><div class="a" style="left:6px;top:735px;width:37px;height:2px;background:#8e8e8e"></div>
<div class="a" style="left:4px;top:738.5px;width:41px;height:39px;border:1.5px solid #8e8e8e;border-bottom:none;border-radius:4px 4px 0 0;background:linear-gradient(#fff,#f8f8f8)"></div><div class="a" style="left:6px;top:777.5px;width:37px;height:2px;background:#8e8e8e"></div>
<div class="a" style="left:4px;top:781px;width:41px;height:39px;border:1.5px solid #8e8e8e;border-bottom:none;border-radius:4px 4px 0 0;background:linear-gradient(#fff,#f8f8f8)"></div><div class="a" style="left:6px;top:820px;width:37px;height:2px;background:#8e8e8e"></div>
<div class="a" style="left:4px;top:823px;width:41px;height:41px;border:1.5px solid #8e8e8e;border-top:3px solid #f08a00;border-bottom:3px solid #f08a00;border-radius:6px;background:#fff"></div>
<svg class="a" style="left:8px;top:192px;" width="32" height="32" viewBox="0 0 32 32"><rect x="3.5" y="4" width="24" height="18" fill="none" stroke="#7aa0d0" stroke-width="1.2"/>
 <g fill="#6a9ad8" stroke="#3a6ab0" stroke-width=".8"><rect x="1.5" y="2" width="4" height="4"/><rect x="13.5" y="2" width="4" height="4"/><rect x="25.5" y="2" width="4" height="4"/>
 <rect x="1.5" y="11" width="4" height="4"/><rect x="25.5" y="11" width="4" height="4"/><rect x="1.5" y="20" width="4" height="4"/><rect x="13.5" y="20" width="4" height="4"/></g>
 <path d="M10.5 7.5H19.5V10.3H18.8Q18.6 8.7 17.3 8.6H16V15.8Q16 16.7 17.3 16.8V17.4H12.7V16.8Q14 16.7 14 15.8V8.6H12.7Q11.4 8.7 11.2 10.3H10.5Z" fill="#1a1a1a"/>
 <path d="M23 19.5V28.5M18.5 24H27.5" stroke="#1f3a6a" stroke-width="3.2" stroke-linecap="round"/></svg>
<svg class="a" style="left:9px;top:233px;" width="32" height="32" viewBox="0 0 32 32"><rect x="2" y="3" width="27" height="26" rx="2" fill="#eef4f8" stroke="#5aa0d0" stroke-width="2"/>
 <rect x="3" y="4" width="25" height="3" fill="#8cc2e6"/><path d="M14 5V28" stroke="#5aa0d0" stroke-width="1.5"/>
 <rect x="5" y="10" width="5" height="5" fill="#fff" stroke="#5aa0d0"/><rect x="5" y="18" width="5" height="5" fill="#fff" stroke="#5aa0d0"/>
 <rect x="16" y="8" width="11" height="19" fill="#dde3e8"/></svg>
<svg class="a" style="left:8px;top:275px;" width="32" height="32" viewBox="0 0 32 32"><rect x="1" y="1.3" width="3.6" height="29.7" fill="#a03a48"/>
 <path d="M5.5 30.5L7.5 24L25 7.5Q28 5 30.5 7.5Q32 10 30 12.5L13 28.5Z" fill="#b4606a" stroke="#7a2a36" stroke-width=".9"/>
 <path d="M9.5 25L27 9" stroke="#f0c0c8" stroke-width="1.4"/><path d="M5.5 30.5L7.2 25.5L10.5 28.5Z" fill="#5a2a2a"/></svg>
<svg class="a" style="left:8px;top:317px;" width="32" height="32" viewBox="0 0 32 32"><rect x="4" y="27.3" width="23" height="2.8" fill="#c8702a"/>
 <path d="M4 27L6.5 20L22 5Q25 2.5 27.5 5Q30 8 27.5 10.5L11.5 25.5Z" fill="#d08a50" stroke="#a85a20" stroke-width=".9"/>
 <path d="M8.5 21.5L24 7" stroke="#f8dcc0" stroke-width="1.6"/><path d="M4 27L5.8 22L9 25Z" fill="#7a4a20"/></svg>
<svg class="a" style="left:9px;top:364px;" width="32" height="28" viewBox="0 0 32 28"><g fill="#3a78c8"><circle cx="5" cy="6" r="3.5"/><circle cx="15" cy="6" r="3.5"/><circle cx="25" cy="6" r="3.5"/><circle cx="5" cy="17" r="3.5"/><circle cx="15" cy="17" r="3.5"/><circle cx="25" cy="17" r="3.5"/></g></svg>
<svg class="a" style="left:9px;top:402px;" width="32" height="34" viewBox="0 0 32 34"><path d="M4 3H24L29 8V32H4Z" fill="#f3f3f3" stroke="#ccc"/><path d="M7 6H23V30H7Z" fill="#fff" stroke="#555" stroke-width="2"/></svg>
<svg class="a" style="left:9px;top:444px;" width="32" height="34" viewBox="0 0 32 34"><path d="M3 3H21L28 10V32H3Z" fill="#eee" stroke="#bbb"/><path d="M8 4V31M12 4V31" stroke="#ccc"/>
 <path d="M10 31L27 13" stroke="#e8a028" stroke-width="5"/><path d="M26 11L29 14" stroke="#e070c0" stroke-width="3"/><path d="M9 32L11 28L13 30Z" fill="#333"/></svg>
<svg class="a" style="left:9px;top:487px;" width="32" height="34" viewBox="0 0 32 34"><path d="M3 3H21L28 10V32H3Z" fill="#eee" stroke="#bbb"/><path d="M7 12H20M7 16H20M7 20H16M7 24H14" stroke="#999"/>
 <path d="M10 31L27 13" stroke="#e8a028" stroke-width="5"/><path d="M26 11L29 14" stroke="#e070c0" stroke-width="3"/><path d="M9 32L11 28L13 30Z" fill="#333"/></svg>
<svg class="a" style="left:9px;top:530px;" width="34" height="34" viewBox="0 0 34 34"><rect x="2" y="4" width="26" height="18" fill="#2e7a2e"/><path d="M2 10Q10 6 16 10T28 10V4H2Z" fill="#7ab87a"/><rect x="2" y="14" width="26" height="4" fill="#1a4a1a"/>
 <circle cx="26" cy="24" r="7" fill="#fff"/><path d="M26 17V31M19 24H33" stroke="#3aa03a" stroke-width="4"/></svg>
<svg class="a" style="left:9px;top:572px;" width="32" height="32" viewBox="0 0 32 32"><rect x="1.5" y="1.5" width="28" height="28" fill="#fff" stroke="#3a8ad0" stroke-width="2"/>
 <text x="4" y="14" font-family="Liberation Sans" font-weight="bold" font-size="12" fill="#4aa030">1</text><text x="4" y="27" font-family="Liberation Sans" font-weight="bold" font-size="12" fill="#4a6aa0">2</text>
 <path d="M12 7H26M12 11H26" stroke="#5ab040" stroke-width="2"/><path d="M12 20H26M12 24H26" stroke="#5a78b0" stroke-width="2"/></svg>
<svg class="a" style="left:9px;top:614px;" width="32" height="34" viewBox="0 0 32 34"><path d="M3 2H23L28 7V31H3Z" fill="#f4f8fc" stroke="#5a8ac0" stroke-width="1.5"/><path d="M6 6H16" stroke="#f08a20" stroke-width="2"/>
 <path d="M6 11H24M6 15H24M6 19H24M6 23H24M6 27H24" stroke="#4a6aa0" stroke-width="1.2"/><path d="M11 10V29M17 10V29" stroke="#9ab" stroke-width=".8"/></svg>
<svg class="a" style="left:8px;top:657px;" width="34" height="34" viewBox="0 0 34 34"><circle cx="17" cy="17" r="14.5" fill="#c86a6a"/><circle cx="17" cy="17" r="11" fill="#e8a8a8"/>
 <path d="M17 8V17L23 20" stroke="#8a2a2a" stroke-width="1.5" fill="none"/></svg>
<svg class="a" style="left:8px;top:698px;" width="34" height="36" viewBox="0 0 34 36"><rect x="3" y="8" width="28" height="26" fill="#f4f4f4"/><rect x="3" y="6" width="28" height="9" fill="#a03a3a"/>
 <rect x="8" y="3" width="3" height="6" fill="#a03a3a"/><rect x="23" y="3" width="3" height="6" fill="#a03a3a"/>
 <text x="17" y="30" text-anchor="middle" font-family="Liberation Sans" font-weight="bold" font-size="15" fill="#222">26</text><path d="M3 34H31" stroke="#d04040" stroke-width="1.5"/></svg>
<svg class="a" style="left:9px;top:741px;" width="32" height="34" viewBox="0 0 32 34"><path d="M3 4H23L28 9V32H3Z" fill="#f4f8fc" stroke="#5a8ac0" stroke-width="1.5"/><path d="M6 8H16" stroke="#f08a20" stroke-width="2"/>
 <path d="M6 13H24M6 17H24M6 21H24M6 25H24M6 29H24" stroke="#4a6aa0" stroke-width="1.2"/>
 <text x="19" y="14" font-family="Liberation Sans" font-weight="bold" font-size="14" fill="#1a3a8a">#</text></svg>
<svg class="a" style="left:10px;top:785px;" width="30" height="30" viewBox="0 0 30 30"><rect x="2" y="2" width="26" height="26" rx="6" fill="#2a9ae0"/><rect x="2" y="2" width="26" height="12" rx="6" fill="#7ac4f0"/>
 <text x="15" y="23" text-anchor="middle" font-family="Liberation Sans" font-weight="bold" font-size="17" fill="#fff">%</text></svg>
<svg class="a" style="left:8px;top:826px;" width="34" height="34" viewBox="0 0 34 34"><ellipse cx="22" cy="24.0" rx="7.5" ry="3" fill="#8a8a8a" stroke="#6a6a6a" stroke-width=".7"/><ellipse cx="22" cy="20.8" rx="7.5" ry="3" fill="#9a9a9a" stroke="#6a6a6a" stroke-width=".7"/><ellipse cx="22" cy="17.6" rx="7.5" ry="3" fill="#aaaaaa" stroke="#6a6a6a" stroke-width=".7"/><ellipse cx="22" cy="14.4" rx="7.5" ry="3" fill="#bababa" stroke="#6a6a6a" stroke-width=".7"/><ellipse cx="22" cy="11.2" rx="7.5" ry="3" fill="#d0d0d0" stroke="#6a6a6a" stroke-width=".7"/><ellipse cx="11" cy="27.0" rx="8" ry="3.2" fill="#9a9a9a" stroke="#707070" stroke-width=".7"/><ellipse cx="11" cy="23.8" rx="8" ry="3.2" fill="#b0b0b0" stroke="#707070" stroke-width=".7"/><ellipse cx="11" cy="20.6" rx="8" ry="3.2" fill="#d8d8d8" stroke="#707070" stroke-width=".7"/><path d="M14 3L20 8L16 9L18 13L14 11L12 13Z" fill="#8a8a8a"/></svg>
<div class="a" style="left:48px;top:243px;width:3px;height:796px;background:#8f8f8f;border-right:1px solid #c8c8c8"></div>
<div class="a" style="left:70px;top:243px;width:36.5px;height:796px;background:#d6efc2"></div>
<div class="a" style="left:108px;top:243px;width:360px;height:796px;background:#fff;border-left:2px solid #9a9a9a;border-right:2px solid #8a8a8a;border-bottom:2px solid #8a8a8a"></div>
<div class="a" style="left:110px;top:1019px;width:356px;height:3px;background:#7a7a7a;border-bottom:1px solid #bbb"></div>
<svg class="a" style="left:70px;top:243px" width="30" height="796"><path d="M0 2.41H10M0 7.13H10M0 11.86H10M0 21.30H10M0 26.03H10M0 30.75H10M0 35.48H10M0 44.92H10M0 49.65H10M0 54.37H10M0 59.10H10M0 68.54H10M0 73.27H10M0 77.99H10M0 82.72H10M0 92.16H10M0 96.89H10M0 101.61H10M0 106.34H10M0 115.78H10M0 120.51H10M0 125.23H10M0 129.96H10M0 139.40H10M0 144.13H10M0 148.85H10M0 153.58H10M0 163.02H10M0 167.75H10M0 172.47H10M0 177.20H10M0 186.64H10M0 191.37H10M0 196.09H10M0 200.82H10M0 210.26H10M0 214.99H10M0 219.71H10M0 224.44H10M0 233.88H10M0 238.61H10M0 243.33H10M0 248.06H10M0 257.50H10M0 262.23H10M0 266.95H10M0 271.68H10M0 281.12H10M0 285.85H10M0 290.57H10M0 295.30H10M0 304.74H10M0 309.47H10M0 314.19H10M0 318.92H10M0 328.36H10M0 333.09H10M0 337.81H10M0 342.54H10M0 351.98H10M0 356.71H10M0 361.43H10M0 366.16H10M0 375.60H10M0 380.33H10M0 385.05H10M0 389.78H10M0 399.22H10M0 403.95H10M0 408.67H10M0 413.40H10M0 422.84H10M0 427.57H10M0 432.29H10M0 437.02H10M0 446.46H10M0 451.19H10M0 455.91H10M0 460.64H10M0 470.08H10M0 474.81H10M0 479.53H10M0 484.26H10M0 493.70H10M0 498.43H10M0 503.15H10M0 507.88H10M0 517.32H10M0 522.05H10M0 526.77H10M0 531.50H10M0 540.94H10M0 545.67H10M0 550.39H10M0 555.12H10M0 564.56H10M0 569.29H10M0 574.01H10M0 578.74H10M0 588.18H10M0 592.91H10M0 597.63H10M0 602.36H10M0 611.80H10M0 616.53H10M0 621.25H10M0 625.98H10M0 635.42H10M0 640.15H10M0 644.87H10M0 649.60H10M0 659.04H10M0 663.77H10M0 668.49H10M0 673.22H10M0 682.66H10M0 687.39H10M0 692.11H10M0 696.84H10M0 706.28H10M0 711.01H10M0 715.73H10M0 720.46H10M0 729.90H10M0 734.63H10M0 739.35H10M0 744.08H10M0 753.52H10M0 758.25H10M0 762.97H10M0 767.70H10M0 777.14H10M0 781.87H10M0 786.59H10M0 791.32H10" stroke="#b0b0b0" stroke-width="1.4"/><path d="M0 16.58H15M0 63.82H15M0 111.06H15M0 158.30H15M0 205.54H15M0 252.78H15M0 300.02H15M0 347.26H15M0 394.50H15M0 441.74H15M0 488.98H15M0 536.22H15M0 583.46H15M0 630.70H15M0 677.94H15M0 725.18H15M0 772.42H15" stroke="#1a2ae8" stroke-width="1.5"/><path d="M0 40.20H25M0 87.44H25M0 134.68H25M0 181.92H25M0 229.16H25M0 276.40H25M0 323.64H25M0 370.88H25M0 418.12H25M0 465.36H25M0 512.60H25M0 559.84H25M0 607.08H25M0 654.32H25M0 701.56H25M0 748.80H25" stroke="#f0201a" stroke-width="1.5"/></svg>
<div class="t mono" style="left:73.6px;top:237.5px;font-size:12.5px;color:#222;letter-spacing:1.05px">130</div>
<div class="t mono" style="left:73.6px;top:284.7px;font-size:12.5px;color:#222;letter-spacing:1.05px">140</div>
<div class="t mono" style="left:73.6px;top:331.9px;font-size:12.5px;color:#222;letter-spacing:1.05px">150</div>
<div class="t mono" style="left:73.6px;top:379.2px;font-size:12.5px;color:#222;letter-spacing:1.05px">160</div>
<div class="t mono" style="left:73.6px;top:426.4px;font-size:12.5px;color:#222;letter-spacing:1.05px">170</div>
<div class="t mono" style="left:73.6px;top:473.7px;font-size:12.5px;color:#222;letter-spacing:1.05px">180</div>
<div class="t mono" style="left:73.6px;top:520.9px;font-size:12.5px;color:#222;letter-spacing:1.05px">190</div>
<div class="t mono" style="left:73.6px;top:568.1px;font-size:12.5px;color:#222;letter-spacing:1.05px">200</div>
<div class="t mono" style="left:73.6px;top:615.4px;font-size:12.5px;color:#222;letter-spacing:1.05px">210</div>
<div class="t mono" style="left:73.6px;top:662.6px;font-size:12.5px;color:#222;letter-spacing:1.05px">220</div>
<div class="t mono" style="left:73.6px;top:709.9px;font-size:12.5px;color:#222;letter-spacing:1.05px">230</div>
<div class="t mono" style="left:73.6px;top:757.1px;font-size:12.5px;color:#222;letter-spacing:1.05px">240</div>
<div class="t mono" style="left:73.6px;top:804.3px;font-size:12.5px;color:#222;letter-spacing:1.05px">250</div>
<div class="t mono" style="left:73.6px;top:851.6px;font-size:12.5px;color:#222;letter-spacing:1.05px">260</div>
<div class="t mono" style="left:73.6px;top:898.8px;font-size:12.5px;color:#222;letter-spacing:1.05px">270</div>
<div class="t mono" style="left:73.6px;top:946.1px;font-size:12.5px;color:#222;letter-spacing:1.05px">280</div>
<div class="t mono" style="left:73.6px;top:993.3px;font-size:12.5px;color:#222;letter-spacing:1.05px">290</div>
<svg class="a" style="left:70px;top:979px" width="37" height="4"><path d="M1 2H36" stroke="#222" stroke-width="1.8" stroke-dasharray="3.5 3.5"/></svg>
<svg class="a" style="left:47px;top:689px;" width="20" height="16" viewBox="0 0 20 16"><path d="M1 1.5H13L18.5 7.5L13 14H1Z" fill="#f2f2f2" stroke="#eee"/><path d="M18.5 7.5L13 14H1" fill="none" stroke="#777" stroke-width="1.5"/></svg>
<div class="a" style="left:108px;top:183px;width:360px;height:60px;background:#ededed"></div>
<div class="a" style="left:108px;top:185px;width:360px;height:3px;background:#8a8a8a"></div>
<div class="a" style="left:108px;top:202px;width:359px;height:41px;background:#d6efc2"></div>
<div class="a" style="left:107px;top:183px;width:2px;height:60px;background:#9a9a9a"></div>
<svg class="a" style="left:108px;top:202px" width="360" height="30"><path d="M5.62 0V14M10.35 0V14M15.08 0V14M19.80 0V14M29.25 0V14M33.97 0V14M38.70 0V14M43.43 0V14M52.88 0V14M57.60 0V14M62.32 0V14M67.05 0V14M76.50 0V14M81.22 0V14M85.95 0V14M90.68 0V14M100.12 0V14M104.85 0V14M109.57 0V14M114.30 0V14M123.75 0V14M128.47 0V14M133.20 0V14M137.92 0V14M147.38 0V14M152.10 0V14M156.82 0V14M161.55 0V14M171.00 0V14M175.73 0V14M180.45 0V14M185.17 0V14M194.62 0V14M199.35 0V14M204.07 0V14M208.80 0V14M218.25 0V14M222.98 0V14M227.70 0V14M232.42 0V14M241.88 0V14M246.60 0V14M251.32 0V14M256.05 0V14M265.50 0V14M270.23 0V14M274.95 0V14M279.67 0V14M289.12 0V14M293.85 0V14M298.57 0V14M303.30 0V14M312.75 0V14M317.48 0V14M322.20 0V14M326.92 0V14M336.38 0V14M341.10 0V14M345.82 0V14M350.55 0V14" stroke="#b0b0b0" stroke-width="1.4"/><path d="M24.53 0V25M71.78 0V25M119.02 0V25M166.27 0V25M213.52 0V25M260.77 0V25M308.02 0V25M355.27 0V25" stroke="#1a2ae8" stroke-width="1.5"/><path d="M0.90 0V25M48.15 0V25M95.40 0V25M142.65 0V25M189.90 0V25M237.15 0V25M284.40 0V25M331.65 0V25" stroke="#f0201a" stroke-width="1.5"/></svg>
<div class="t mono" style="left:107.9px;top:226.5px;font-size:12.5px;color:#2a2a2a;letter-spacing:0.75px">0</div>
<div class="t mono" style="left:155.2px;top:226.5px;font-size:12.5px;color:#2a2a2a;letter-spacing:0.75px">10</div>
<div class="t mono" style="left:202.4px;top:226.5px;font-size:12.5px;color:#2a2a2a;letter-spacing:0.75px">20</div>
<div class="t mono" style="left:249.7px;top:226.5px;font-size:12.5px;color:#2a2a2a;letter-spacing:0.75px">30</div>
<div class="t mono" style="left:296.9px;top:226.5px;font-size:12.5px;color:#2a2a2a;letter-spacing:0.75px">40</div>
<div class="t mono" style="left:344.1px;top:226.5px;font-size:12.5px;color:#2a2a2a;letter-spacing:0.75px">50</div>
<div class="t mono" style="left:391.4px;top:226.5px;font-size:12.5px;color:#2a2a2a;letter-spacing:0.75px">60</div>
<div class="t mono" style="left:438.6px;top:226.5px;font-size:12.5px;color:#2a2a2a;letter-spacing:0.75px">70</div>
<svg class="a" style="left:445px;top:205px" width="4" height="37"><path d="M2 1V36" stroke="#222" stroke-width="1.8" stroke-dasharray="3.5 3.5"/></svg>
<svg class="a" style="left:220px;top:184px;" width="16" height="20" viewBox="0 0 16 20"><path d="M1 1H14V11L8 18H1Z" fill="#f2f2f2" stroke="#888" stroke-width="1.2"/></svg>
<div class="a" style="left:47px;top:184px;width:61px;height:60px;background:linear-gradient(30deg,#ffffff 0%,#e6fae6 50%,#c0f8c0 100%);border-left:2px solid #9a9a9a;border-bottom:2px solid #8a8a8a;border-right:2px solid #9a9a9a"></div>
<svg class="a" style="left:47px;top:184px;" width="61" height="60" viewBox="0 0 61 60"><defs><linearGradient id="pg" x1="0" y1="0" x2="0" y2="1"><stop offset="0" stop-color="#0038f0"/><stop offset="1" stop-color="#0098f4"/></linearGradient>
 <linearGradient id="pg2" x1="0" y1="0" x2="0" y2="1"><stop offset="0" stop-color="#0060f0"/><stop offset="1" stop-color="#00a8f8"/></linearGradient></defs>
 <ellipse cx="25" cy="20.8" rx="7.6" ry="8.6" fill="#0010f0"/>
 <path d="M9 41.5Q10 33.5 17.6 31Q24 33.8 30.5 31.4L30.6 45.3Q18 45.3 9 41.5Z" fill="url(#pg)"/>
 <path d="M39.5 30A8.5 8.5 0 1 0 46.4 42.3" fill="none" stroke="#eaf8ea" stroke-width="7"/>
 <path d="M39.5 30A8.5 8.5 0 1 0 46.4 42.3" fill="none" stroke="url(#pg2)" stroke-width="4.2" stroke-linecap="round"/>
 <path d="M52.5 39.5L48.2 33.2L43 41.2Z" fill="#0070f0"/></svg>
<div class="a" style="left:119px;top:243px;width:50px;height:10px;background:#c4c4fb"></div>
<div class="a" style="left:186px;top:243px;width:50px;height:10px;background:#c4c4fb"></div>
<div class="a" style="left:259px;top:243px;width:49px;height:10px;background:#c4c4fb"></div>
<div class="a" style="left:311px;top:243px;width:50px;height:10px;background:#c4c4fb"></div>
<div class="a" style="left:110px;top:243px;width:356px;height:10px;overflow:hidden"><div class="t" style="left:9px;top:-7px;font-size:14px;font-weight:bold;color:#111;letter-spacing:0.6px">SGST%</div><div class="t" style="left:76px;top:-7px;font-size:14px;font-weight:bold;color:#111;letter-spacing:0.6px">SGST%</div><div class="t" style="left:148px;top:-7px;font-size:14px;font-weight:bold;color:#111;letter-spacing:0.6px">CGST%</div><div class="t" style="left:201px;top:-7px;font-size:14px;font-weight:bold;color:#111;letter-spacing:0.6px">CGST</div></div>
<div class="a" style="left:113px;top:258px;width:285px;height:139px;background:#fdebf6;border:2.5px solid #f0287a"></div>
<div class="a" style="left:115px;top:262px;width:39px;height:22px;background:#ffc08a"></div>
<div class="a" style="left:172px;top:262px;width:61px;height:22px;background:#ffc08a"></div>
<div class="a" style="left:257px;top:262px;width:103px;height:22px;background:#ffc08a"></div>
<div class="t" style="left:115px;top:265px;font-size:13.5px;font-weight:bold;color:#111;">IIGST</div>
<div class="t" style="left:172px;top:265px;font-size:13.5px;font-weight:bold;color:#111;">ST_AMTT</div>
<div class="t" style="left:257px;top:265px;font-size:13.5px;font-weight:bold;color:#111;">CGSCGST_AMT</div>
<div class="a" style="left:131px;top:397px;width:289px;height:21px;background:#ffc08a"></div>
<div class="t" style="left:132px;top:400px;font-size:14px;font-weight:bold;color:#111;;letter-spacing:0.1px">Shop Primary Bill Message</div>
<div class="a" style="left:134px;top:418px;width:283px;height:19px;background:#ffc08a"></div>
<div class="t" style="left:135px;top:419px;font-size:14px;font-weight:bold;color:#111;">Shop Secondary Bill Message</div>
<div class="a" style="left:112px;top:435px;width:119px;height:19px;background:#c4c4fb"></div>
<div class="a" style="left:235px;top:435px;width:177px;height:21px;background:#ffc08a"></div>
<div class="t" style="left:113px;top:438px;font-size:14px;font-weight:bold;color:#111;;letter-spacing:-0.8px">USER NAME :</div>
<div class="t" style="left:235px;top:438px;font-size:14px;font-weight:bold;color:#111;">User Name</div>
<div class="a" style="left:112px;top:454px;width:208px;height:21px;background:#c4c4fb"></div>
<div class="t" style="left:113px;top:457px;font-size:14px;font-weight:bold;color:#111;">Payment Details</div>
<div class="a" style="left:116px;top:476px;width:201px;height:178px;background:#c4c4fb"></div>
<div class="a" style="left:222px;top:476px;width:68px;height:19px;background:#fff"></div>
<div class="a" style="left:282px;top:495px;width:8px;height:21px;background:#fff"></div>
<div class="a" style="left:284px;top:516px;width:6px;height:41px;background:#fff"></div>
<div class="a" style="left:266px;top:557px;width:24px;height:33px;background:#fff"></div>
<div class="a" style="left:317px;top:476px;width:5px;height:178px;background:#fff"></div>
<div class="a" style="left:322px;top:476px;width:77px;height:199px;background:#ffc08a"></div>
<div class="a" style="left:112px;top:654px;width:210px;height:21px;background:#c4c4fb"></div>
<div class="t" style="left:116px;top:479px;font-size:14px;font-weight:bold;color:#111;;letter-spacing:0.43px">Cash Tendered</div>
<div class="t" style="left:289px;top:479px;font-size:14px;font-weight:bold;color:#111;">:</div>
<div class="t" style="right:1524px;top:479px;font-size:14px;font-weight:bold;color:#111;letter-spacing:0.62px;margin-right:-0.6px">Tendered</div>
<div class="t" style="left:116px;top:498px;font-size:14px;font-weight:bold;color:#111;;letter-spacing:0.1px">Balance Amount</div>
<div class="t" style="left:289px;top:498px;font-size:14px;font-weight:bold;color:#111;">:</div>
<div class="t" style="right:1524px;top:498px;font-size:14px;font-weight:bold;color:#111;letter-spacing:0.62px;margin-right:-0.6px">Tendered</div>
<div class="t" style="left:116px;top:519px;font-size:14px;font-weight:bold;color:#111;;letter-spacing:0.2px">Credit Card</div>
<div class="t" style="left:289px;top:519px;font-size:14px;font-weight:bold;color:#111;">:</div>
<div class="t" style="right:1524px;top:519px;font-size:14px;font-weight:bold;color:#111;letter-spacing:0.62px;margin-right:-0.6px">Tender</div>
<div class="t" style="left:116px;top:539px;font-size:14px;font-weight:bold;color:#111;;letter-spacing:0.3px">Coupon Amount</div>
<div class="t" style="left:289px;top:539px;font-size:14px;font-weight:bold;color:#111;">:</div>
<div class="t" style="right:1524px;top:539px;font-size:14px;font-weight:bold;color:#111;letter-spacing:0.62px;margin-right:-0.6px">Tender</div>
<div class="t" style="left:116px;top:558px;font-size:14px;font-weight:bold;color:#111;;letter-spacing:0.2px">Credit Sales</div>
<div class="t" style="left:289px;top:558px;font-size:14px;font-weight:bold;color:#111;">:</div>
<div class="t" style="right:1524px;top:558px;font-size:14px;font-weight:bold;color:#111;letter-spacing:0.62px;margin-right:-0.6px">Tender</div>
<div class="t" style="left:116px;top:575px;font-size:14px;font-weight:bold;color:#111;;letter-spacing:0.45px">Voucher Amount</div>
<div class="t" style="left:289px;top:575px;font-size:14px;font-weight:bold;color:#111;">:</div>
<div class="t" style="right:1524px;top:575px;font-size:14px;font-weight:bold;color:#111;letter-spacing:0.62px;margin-right:-0.6px">Tender</div>
<div class="t" style="left:116px;top:593px;font-size:14px;font-weight:bold;color:#111;">Third Par. Finance</div>
<div class="t" style="right:1524px;top:593px;font-size:14px;font-weight:bold;color:#111;letter-spacing:0.62px;margin-right:-0.6px">Tender</div>
<div class="t" style="left:116px;top:614px;font-size:14px;font-weight:bold;color:#111;;letter-spacing:-0.15px">RRN Amount</div>
<div class="t" style="left:289px;top:614px;font-size:14px;font-weight:bold;color:#111;">:</div>
<div class="t" style="right:1524px;top:614px;font-size:14px;font-weight:bold;color:#111;letter-spacing:0.62px;margin-right:-0.6px">Tender</div>
<div class="t" style="left:116px;top:635px;font-size:14px;font-weight:bold;color:#111;;letter-spacing:0.12px">Loyalty Redemption</div>
<div class="t" style="left:289px;top:635px;font-size:14px;font-weight:bold;color:#111;">:</div>
<div class="t" style="right:1524px;top:635px;font-size:14px;font-weight:bold;color:#111;letter-spacing:0.62px;margin-right:-0.6px">Tender</div>
<div class="t" style="left:112px;top:657px;font-size:14px;font-weight:bold;color:#111;">TOTAL LOYALTY POINT :</div>
<div class="t" style="right:1524px;top:657px;font-size:14px;font-weight:bold;color:#111">Total</div>
<div class="a" style="left:205.5px;top:686.5px;width:113.5px;height:43.8px;border:4px solid #fe0000;border-radius:2.5px"></div>
<div class="a" style="left:229px;top:699px;width:71px;height:21px;background:#d6ee7a;border:1px solid #777"></div>
<div class="t mono" style="left:232px;top:704.2px;font-size:14px;color:#333;letter-spacing:0.7px">[q]</div>
<div class="a" style="left:225px;top:706.3px;width:7.5px;height:7.5px;background:#008000"></div>
<div class="a" style="left:296px;top:706.3px;width:7.5px;height:7.5px;background:#008000"></div>
<div class="a" style="left:261px;top:695.2px;width:7.5px;height:7.5px;background:#008000"></div>
<div class="a" style="left:261px;top:716.5px;width:7.5px;height:7.5px;background:#008000"></div>
<div class="a" style="left:1612px;top:183px;width:24px;height:901px;background:#fff;border-left:1.5px solid #aaa;border-right:2px solid #6a6a6a"></div>
<div class="a" style="left:1612px;top:555px;width:22px;height:504px;background:#f0f0f0;border-top:2px solid #fafafa;border-left:2px solid #fafafa;box-shadow:inset -1.5px -1px 0 #777"></div>
<div class="a" style="left:1613px;top:184px;width:21px;height:21px;background:#f0f0f0;border-bottom:2px solid #999;border-right:1px solid #aaa"></div>
<svg class="a" style="left:1618px;top:190px;" width="12" height="8" viewBox="0 0 12 8"><path d="M1 7H11L6 1Z" fill="#111"/></svg>
<div class="a" style="left:1613px;top:1061px;width:21px;height:22px;background:#f0f0f0;border-top:2px solid #999;border-right:1px solid #aaa"></div>
<svg class="a" style="left:1618px;top:1069px;" width="12" height="8" viewBox="0 0 12 8"><path d="M1 1H11L6 7Z" fill="#111"/></svg>
<div class="a" style="left:48px;top:1083px;width:1588px;height:24px;background:#fff;border-top:2px solid #9a9a9a;border-bottom:2px solid #8a8a8a"></div>
<div class="a" style="left:48px;top:1085px;width:20px;height:20px;background:#f0f0f0;border-right:1px solid #aaa"></div>
<svg class="a" style="left:53px;top:1089px;" width="10" height="12" viewBox="0 0 10 12"><path d="M8 1V11L2 6Z" fill="#aaa"/></svg>
<div class="a" style="left:1615px;top:1085px;width:20px;height:20px;background:#f0f0f0;border-left:1px solid #aaa"></div>
<svg class="a" style="left:1620px;top:1089px;" width="10" height="12" viewBox="0 0 10 12"><path d="M2 1V11L8 6Z" fill="#aaa"/></svg>

<!-- ============ RIGHT PANEL ============ -->
<div class="a" style="left:1636px;top:134px;width:5px;height:950px;background:#d0d0d0"></div>
<div class="a" style="left:1640px;top:133px;width:275px;height:752px;background:#fff;border-top:2.5px solid #6a6a6a;border-left:2.5px solid #777;border-right:3px solid #eee;border-bottom:3px solid #666;box-shadow:inset 0 -1.5px 0 #eee"></div>
<div class="a" style="left:1643px;top:136px;width:267px;height:19px;background:#333"></div>
<div class="t" style="left:1643px;top:137.7px;font-size:14.2px;font-weight:bold;color:#fff;width:267px;text-align:center">Field Properties</div>
<div class="a" style="left:1643px;top:157px;width:154px;height:28px;border:1.5px solid #2a64a8;border-radius:4px;background:linear-gradient(#fbfbfb,#ececec)"></div>
<div class="a" style="left:1650px;top:165px;width:14px;height:12px;border:1.5px solid #8a8a8a;border-radius:3px;background:linear-gradient(#fff,#eee)"></div>
<div class="t" style="left:1680px;top:163.5px;font-size:15.5px;font-weight:bold;color:#111;letter-spacing:0.72px"><u>W</u>ord Rotate</div>
<div class="a" style="left:1646px;top:190px;width:16px;height:16px;border:2px solid #666;background:#fff"></div><svg class="a" style="left:1648px;top:192px;" width="12" height="12" viewBox="0 0 12 12"><path d="M1.5 6L4.5 9.5L10.5 2" stroke="#111" stroke-width="2.2" fill="none"/></svg>
<div class="t" style="left:1669px;top:192.2px;font-size:13.6px;font-weight:normal;color:#111;">Print visible</div>
<div class="a" style="left:1646px;top:210px;width:16px;height:16px;border:2px solid #666;background:#fff"></div>
<div class="t" style="left:1669px;top:212.2px;font-size:13.6px;font-weight:normal;color:#111;letter-spacing:0.42px">Field result empty/zero doesn't print</div>
<div class="a" style="left:1646px;top:230px;width:262px;height:27px;background:#e0e2d3;border:2px solid #8a8a8a;border-right-color:#9a9a9a;border-bottom-color:#aaa"></div><div class="a" style="left:1886px;top:232px;width:20px;height:23px;background:#efefef;border-bottom:2px solid #9a9a9a;border-right:1px solid #bbb"></div><svg class="a" style="left:1891px;top:240.5px;" width="11" height="7" viewBox="0 0 11 7"><path d="M1 1H10L5.5 6Z" fill="#b0b0b0"/></svg>
<div class="a" style="left:1646px;top:268px;width:16px;height:16px;border:2px solid #666;background:#fff"></div>
<div class="t" style="left:1668px;top:270.2px;font-size:13.6px;font-weight:normal;color:#111;;letter-spacing:0.22px">Word lenght (8,12)</div>
<div class="a" style="left:1793px;top:262px;width:117px;height:29px;background:#e0e2d3;border:1.5px solid #8a8a8a;border-right-color:#aaa;border-bottom-color:#aaa"></div>
<div class="t" style="left:1650px;top:295.2px;font-size:13.6px;font-weight:normal;color:#111;">i.e:- Amount Value &gt;&gt; Value</div>
<div class="t" style="left:1646px;top:319.2px;font-size:13.6px;font-weight:normal;color:#111;">Text Change Case</div>
<div class="a" style="left:1766px;top:313px;width:142px;height:27px;background:#e0e2d3;border:2px solid #8a8a8a;border-right-color:#9a9a9a;border-bottom-color:#aaa"></div><div class="a" style="left:1886px;top:315px;width:20px;height:23px;background:#efefef;border-bottom:2px solid #9a9a9a;border-right:1px solid #bbb"></div><svg class="a" style="left:1891px;top:323.5px;" width="11" height="7" viewBox="0 0 11 7"><path d="M1 1H10L5.5 6Z" fill="#b0b0b0"/></svg><div class="t" style="left:1771px;top:320.2px;font-size:13.6px;font-weight:normal;color:#8a8a8a;">Default</div>
<div class="a" style="left:1643px;top:346px;width:267px;height:91px;border:1.5px solid #9a9a9a;border-top:none"></div>
<div class="a" style="left:1643px;top:346px;width:267px;height:18px;background:#c6d7ef;border:1.5px solid #8a94a8"></div><div class="t" style="left:1643px;width:267px;text-align:center;top:348.8px;font-size:14px;font-weight:bold;color:#111">Numeric Field</div>
<div class="a" style="left:1645px;top:375px;width:16px;height:16px;border:2px solid #666;background:#fff"></div>
<div class="t" style="left:1667px;top:367.6px;font-size:13.6px;font-weight:normal;color:#2222ee;;letter-spacing:0.5px">Print with</div>
<div class="t" style="left:1667px;top:387.1px;font-size:13.6px;font-weight:normal;color:#2222ee;">Currency Symbol</div>
<div class="a" style="left:1782px;top:375px;width:16px;height:16px;border:2px solid #666;background:#fff"></div>
<div class="t" style="left:1805px;top:367.6px;font-size:13.6px;font-weight:normal;color:#2222ee;;letter-spacing:0.35px">Print Currency</div>
<div class="t" style="left:1805px;top:387.1px;font-size:13.6px;font-weight:normal;color:#2222ee;">Symbol after</div>
<div class="a" style="left:1645px;top:412px;width:16px;height:16px;border:2px solid #666;background:#fff"></div>
<div class="t" style="left:1667px;top:413.6px;font-size:13.6px;font-weight:normal;color:#111;">Round off</div>
<div class="a" style="left:1782px;top:412px;width:16px;height:16px;border:2px solid #666;background:#fff"></div>
<div class="t" style="left:1805px;top:404.1px;font-size:13.6px;font-weight:normal;color:#111;;letter-spacing:-0.3px">Regional</div>
<div class="t" style="left:1805px;top:423.6px;font-size:13.6px;font-weight:normal;color:#111;">language-Arabic</div>
<div class="a" style="left:1643px;top:437px;width:267px;height:303px;border:1.5px solid #9a9a9a"></div>
<div class="a" style="left:1647px;top:441px;width:259px;height:19px;background:#c6d7ef;border:1.5px solid #8a94a8"></div><div class="t" style="left:1647px;width:259px;text-align:center;top:444.2px;font-size:14.2px;font-weight:bold;color:#111">For Header/Footer Section Field</div>
<div class="a" style="left:1647px;top:467px;width:120px;height:19px;background:#e0e2d3"></div>
<div class="a" style="left:1647px;top:486px;width:91px;height:19px;background:#e0e2d3"></div>
<div class="a" style="left:1647px;top:468px;width:16px;height:16px;border:2px solid #7a7a7a;background:#f0f0f0"></div>
<div class="t" style="left:1669px;top:469.6px;font-size:13.6px;font-weight:normal;color:#a8a8a8;">Word Wrap</div>
<div class="a" style="left:1647px;top:488px;width:16px;height:16px;border:2px solid #7a7a7a;background:#f0f0f0"></div>
<div class="t" style="left:1669px;top:489.6px;font-size:13.6px;font-weight:normal;color:#a8a8a8;">Word Split</div>
<div class="t" style="left:1744px;top:490.1px;font-size:13.6px;font-weight:normal;color:#111;">Delimiter</div>
<div class="a" style="left:1800px;top:482px;width:35px;height:29px;background:#e0e2d3;border:1.5px solid #8a8a8a;border-right-color:#aaa;border-bottom-color:#aaa"></div>
<div class="t" style="left:1803px;top:489.1px;font-size:13.6px;font-weight:normal;color:#aaa;">,</div>
<div class="a" style="left:1647px;top:511px;width:16px;height:16px;border:2px solid #666;background:#fff"></div>
<div class="t" style="left:1669px;top:512.1px;font-size:13.6px;font-weight:normal;color:#111;;letter-spacing:0.23px">Don't print in  last page only</div>
<div class="a" style="left:1647px;top:531px;width:16px;height:16px;border:2px solid #666;background:#fff"></div>
<div class="t" style="left:1669px;top:532.6px;font-size:13.6px;font-weight:normal;color:#111;">Print in last page only</div>
<div class="a" style="left:1647px;top:551px;width:16px;height:16px;border:2px solid #666;background:#fff"></div>
<div class="t" style="left:1669px;top:552.1px;font-size:13.6px;font-weight:normal;color:#111;;letter-spacing:0.17px">Duplicate copy [ label ]</div>
<div class="a" style="left:1648px;top:573px;width:16px;height:16px;border:2px solid #666;background:#fff"></div>
<div class="t" style="left:1670px;top:575.1px;font-size:13.6px;font-weight:normal;color:#111;">Number to words</div>
<div class="a" style="left:1780px;top:582px;width:126px;height:10px;background:#e0e2d3"></div>
<div class="a" style="left:1647px;top:590px;width:259px;height:146px;background:#e0e2d3;border:1.5px solid #9a9a9a;border-bottom-color:#fff"></div>
<div class="a" style="left:1650px;top:594px;width:252px;height:20px;background:#c6d7ef;border:1.5px solid #8a94a8"></div><div class="t" style="left:1650px;width:252px;text-align:center;top:597.7px;font-size:14.2px;font-weight:bold;color:#111">Number to Word Setting</div>
<div class="a" style="left:1654px;top:618px;width:16px;height:16px;border:2px solid #666;background:#fff"></div><svg class="a" style="left:1656px;top:620px;" width="12" height="12" viewBox="0 0 12 12"><path d="M1.5 6L4.5 9.5L10.5 2" stroke="#111" stroke-width="2.2" fill="none"/></svg>
<div class="t" style="left:1676px;top:619.6px;font-size:13.6px;font-weight:normal;color:#111;;letter-spacing:-0.5px">Print CURRENCY Name</div>
<div class="a" style="left:1654px;top:637px;width:16px;height:16px;border:2px solid #666;background:#fff"></div>
<div class="t" style="left:1676px;top:638.6px;font-size:13.6px;font-weight:normal;color:#111;;letter-spacing:-0.33px">Print CURRENCY Suffix</div>
<div class="t" style="left:1654px;top:662.6px;font-size:13.6px;font-weight:normal;color:#111;">Currency Name</div>
<div class="a" style="left:1751px;top:654px;width:114px;height:30px;border:1.5px solid #777;border-right-color:#999;border-bottom-color:#999"></div>
<div class="t" style="left:1754px;top:660.1px;font-size:13.6px;font-weight:normal;color:#111;;letter-spacing:-0.6px">Rupees</div>
<div class="t" style="left:1654px;top:693.6px;font-size:13.6px;font-weight:normal;color:#111;;letter-spacing:-0.3px">Coin Name</div>
<div class="a" style="left:1751px;top:685px;width:114px;height:30px;border:1.5px solid #777;border-right-color:#999;border-bottom-color:#999"></div>
<div class="t" style="left:1754px;top:691.1px;font-size:13.6px;font-weight:normal;color:#111;;letter-spacing:-0.6px">Paisa</div>
<div class="a" style="left:1654px;top:717px;width:16px;height:16px;border:2px solid #666;background:#fff"></div>
<div class="t" style="left:1677px;top:718.6px;font-size:13.6px;font-weight:normal;color:#2222ee;letter-spacing:0.3px">International standard format</div>
<div class="a" style="left:1652px;top:750px;width:262px;height:105px;border:1.5px solid #8a8a8a;border-right:none"></div>
<div class="a" style="left:1655px;top:752px;width:257px;height:21px;background:#c6d7ef;border:1.5px solid #8a94a8"></div><div class="t" style="left:1655px;width:257px;text-align:center;top:756.3px;font-size:14px;font-weight:bold;color:#111">Numeric Field</div>
<div class="a" style="left:1658px;top:776px;width:16px;height:16px;border:2px solid #666;background:#fff"></div>
<div class="t" style="left:1680px;top:777.1px;font-size:13.6px;font-weight:normal;color:#111;">Absolute value [ -99 &gt;&gt; 99 ]</div>
<div class="a" style="left:1658px;top:796px;width:16px;height:16px;border:2px solid #666;background:#fff"></div>
<div class="t" style="left:1680px;top:797.6px;font-size:13.6px;font-weight:normal;color:#111;;letter-spacing:0.12px">Comma Format [1,00,000.00]</div>
<div class="a" style="left:1658px;top:816px;width:16px;height:16px;border:2px solid #666;background:#fff"></div>
<div class="t" style="left:1680px;top:817.6px;font-size:13.6px;font-weight:normal;color:#2222ee;">Comma Format [100,000.00]</div>
<div class="a" style="left:1658px;top:835px;width:16px;height:16px;border:2px solid #666;background:#fff"></div>
<div class="t" style="left:1680px;top:836.1px;font-size:13.6px;font-weight:normal;color:#111;;letter-spacing:0.1px">Comma Format [1.000.000,00]</div>

<!-- ============ STATUS BAR ============ -->
<div class="a" style="left:0;top:1107px;width:1915px;height:28px;background:#c9d8ef"></div>
<div class="a" style="left:0;top:1135px;width:1919px;height:3px;background:#d0d0d0"></div>
<div class="a" style="left:1px;top:1111px;width:270px;height:21px;border:1.5px solid #6e6e6e;border-right-color:#888;border-bottom-color:#888"></div><div class="a" style="left:2px;top:1112px;width:268px;height:19px;overflow:hidden"><div class="t mono" style="left:1px;top:3.5px;font-size:13.6px;letter-spacing:0.48px;color:#222">[q] Upi_qr</div></div>
<div class="t mono" style="left:273px;top:1115px;font-size:13.6px;letter-spacing:0.48px;color:#222">X:-</div>
<div class="a" style="left:300px;top:1111px;width:77px;height:21px;border:1.5px solid #6e6e6e;border-right-color:#888;border-bottom-color:#888"></div><div class="a" style="left:301px;top:1112px;width:75px;height:19px;overflow:hidden"><div class="t mono" style="left:2px;top:3.5px;font-size:13.6px;letter-spacing:0.48px;color:#222">.14[40.1]</div></div>
<div class="t mono" style="left:378px;top:1115px;font-size:13.6px;letter-spacing:0.48px;color:#222">Y:-</div>
<div class="a" style="left:409px;top:1111px;width:77px;height:21px;border:1.5px solid #6e6e6e;border-right-color:#888;border-bottom-color:#888"></div><div class="a" style="left:410px;top:1112px;width:75px;height:19px;overflow:hidden"><div class="t mono" style="left:0;width:75px;text-align:center;top:3.5px;font-size:13.6px;letter-spacing:0.48px;color:#222">227.81</div></div>
<div class="a" style="left:488px;top:1111px;width:439px;height:21px;border:1.5px solid #6e6e6e;border-right-color:#888;border-bottom-color:#888"></div><div class="a" style="left:489px;top:1112px;width:437px;height:19px;overflow:hidden"><div class="t mono" style="left:0;width:437px;text-align:center;top:3.5px;font-size:13.6px;letter-spacing:0.48px;color:#222">Report footer section [76x212(295)]</div></div>
<div class="t mono" style="left:930px;top:1115px;font-size:13.6px;letter-spacing:0.48px;color:#222">Width</div>
<div class="a" style="left:975px;top:1111px;width:110px;height:21px;border:1.5px solid #6e6e6e;border-right-color:#888;border-bottom-color:#888"></div><div class="a" style="left:976px;top:1112px;width:108px;height:19px;overflow:hidden"><div class="t mono" style="left:0;width:108px;text-align:center;top:3.5px;font-size:13.6px;letter-spacing:0.48px;color:#222">76.00605</div></div>
<div class="t mono" style="left:1087px;top:1115px;font-size:13.6px;letter-spacing:0.48px;color:#222">Height</div>
<div class="a" style="left:1141px;top:1111px;width:109px;height:21px;border:1.5px solid #6e6e6e;border-right-color:#888;border-bottom-color:#888"></div><div class="a" style="left:1142px;top:1112px;width:107px;height:19px;overflow:hidden"><div class="t mono" style="left:0;width:107px;text-align:center;top:3.5px;font-size:13.6px;letter-spacing:0.48px;color:#222">300.0025</div></div>

</body></html>
